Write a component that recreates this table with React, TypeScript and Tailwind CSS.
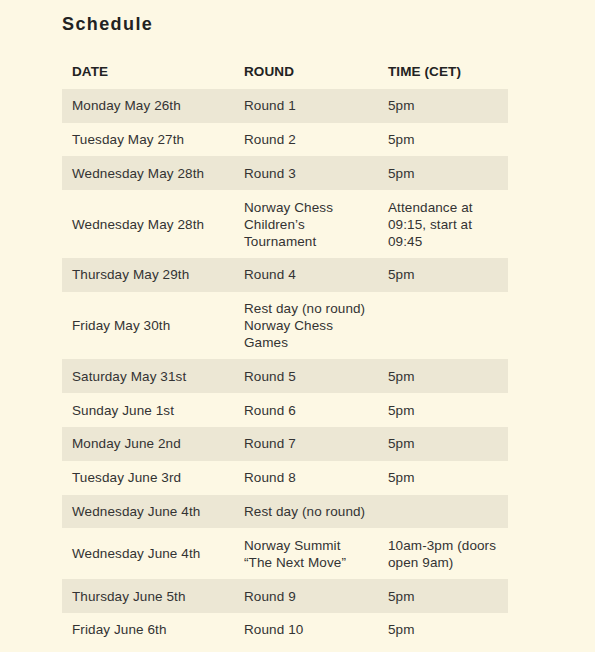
import React from "react";

type Row = { date: string; round: string; time: string };

const rows: Row[] = [
  { date: "Monday May 26th", round: "Round 1", time: "5pm" },
  { date: "Tuesday May 27th", round: "Round 2", time: "5pm" },
  { date: "Wednesday May 28th", round: "Round 3", time: "5pm" },
  {
    date: "Wednesday May 28th",
    round: "Norway Chess Children\u2019s Tournament",
    time: "Attendance at 09:15, start at 09:45",
  },
  { date: "Thursday May 29th", round: "Round 4", time: "5pm" },
  { date: "Friday May 30th", round: "Rest day (no round) Norway Chess Games", time: "" },
  { date: "Saturday May 31st", round: "Round 5", time: "5pm" },
  { date: "Sunday June 1st", round: "Round 6", time: "5pm" },
  { date: "Monday June 2nd", round: "Round 7", time: "5pm" },
  { date: "Tuesday June 3rd", round: "Round 8", time: "5pm" },
  { date: "Wednesday June 4th", round: "Rest day (no round)", time: "" },
  {
    date: "Wednesday June 4th",
    round: "Norway Summit \u201cThe Next Move\u201d",
    time: "10am-3pm (doors open 9am)",
  },
  { date: "Thursday June 5th", round: "Round 9", time: "5pm" },
  { date: "Friday June 6th", round: "Round 10", time: "5pm" },
];

const cell = "px-[10px] py-[8.4px] align-middle text-left";

export default function App() {
  return (
    <div
      className="min-h-[652px] bg-[#fdf8e4] px-[62px] pt-[13px] text-[#333]"
      style={{ fontFamily: '"Liberation Sans", Arial, sans-serif' }}
    >
      <h2 className="text-[18px] font-bold leading-[22px] tracking-[1.4px] text-[#222]">
        Schedule
      </h2>
      <table className="mt-[20px] w-[446px] table-fixed border-collapse text-[13.5px] leading-[17px] tracking-[0.1px]">
        <colgroup>
          <col className="w-[172px]" />
          <col className="w-[144px]" />
          <col className="w-[130px]" />
        </colgroup>
        <thead>
          <tr className="text-[#222]">
            <th className={`${cell} font-semibold`}>DATE</th>
            <th className={`${cell} font-semibold`}>ROUND</th>
            <th className={`${cell} font-semibold`}>TIME (CET)</th>
          </tr>
        </thead>
        <tbody>
          {rows.map((r, i) => (
            <tr key={i} className={i % 2 === 0 ? "bg-[#ece7d4]" : ""}>
              <td className={cell}>{r.date}</td>
              <td className={cell}>{r.round}</td>
              <td className={cell}>{r.time}</td>
            </tr>
          ))}
        </tbody>
      </table>
    </div>
  );
}
